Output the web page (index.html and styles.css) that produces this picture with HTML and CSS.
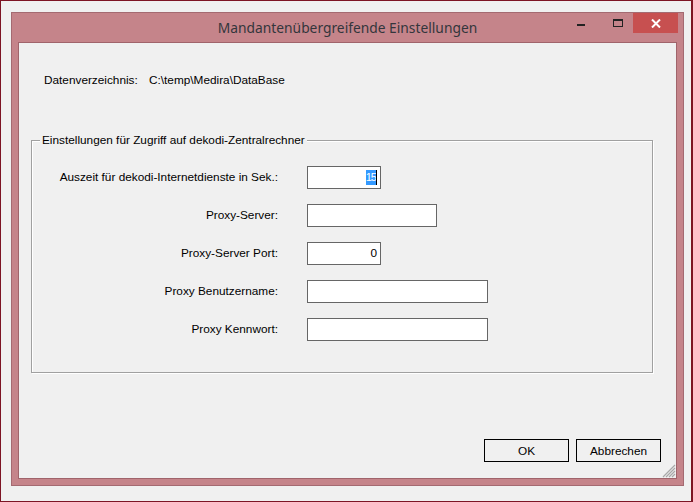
FILE: index.html
```html
<!DOCTYPE html>
<html lang="de">

<head>
  <meta charset="UTF-8">
  <title>Mandantenübergreifende Einstellungen</title>
  <link rel="stylesheet" href="styles.css">
</head>

<body>
  <div class="screen">
    <div class="window">
      <!-- Titelleiste -->
      <div class="titlebar">
        <span></span>
        <span class="title">Mandantenübergreifende Einstellungen</span>
        <div class="controls">
          <span class="btn-min"><i class="min"></i></span>
          <span class="btn-max"><i class="max"></i></span>
          <span class="btn-close">
            <svg width="10" height="9" viewBox="0 0 10 9">
              <path d="M1 0.5 L9 8.5 M9 0.5 L1 8.5" stroke="#fff" stroke-width="2" fill="none"/>
            </svg>
          </span>
        </div>
      </div>

      <!-- Inhalt -->
      <div class="client">
        <div class="datarow">
          <span class="datalabel">Datenverzeichnis:</span>
          <span>C:\temp\Medira\DataBase</span>
        </div>

        <div class="group">
          <span class="legend">Einstellungen für Zugriff auf dekodi-Zentralrechner</span>
          <div class="rows">
            <label>Auszeit für dekodi-Internetdienste in Sek.:</label>
            <div class="field short num"><span class="sel">15</span><span class="caret"></span></div>

            <label>Proxy-Server:</label>
            <div class="field mid"></div>

            <label>Proxy-Server Port:</label>
            <div class="field short num">0</div>

            <label>Proxy Benutzername:</label>
            <div class="field long"></div>

            <label>Proxy Kennwort:</label>
            <div class="field long"></div>
          </div>
        </div>

        <div class="buttons">
          <button>OK</button>
          <button>Abbrechen</button>
        </div>

        <svg class="grip" width="14" height="14" viewBox="0 0 14 14">
          <path d="M13 1 L1 13 M13 4 L4 13 M13 7 L7 13 M13 10 L10 13" stroke="#a8a8a8" stroke-width="1.2" fill="none"/>
        </svg>
      </div>
    </div>
  </div>
</body>

</html>
```

FILE: styles.css
```css
* {
  box-sizing: border-box;
  margin: 0;
  padding: 0;
}

body {
  width: 693px;
  height: 502px;
  overflow: hidden;
  font-family: "Liberation Sans", Arial, sans-serif;
  font-size: 11.8px;
  color: #000;
}

.screen {
  width: 693px;
  height: 502px;
  background-color: #f0f0f0;
  border: 1px solid #7d1424;
  border-right-width: 2px;
  padding: 11px 0 0 10px;
}

.window {
  width: 673px;
  height: 474px;
  background-color: #c5848a;
  border: 1px solid #a46a71;
  padding: 0 6px 6px 6px;
  display: flex;
  flex-direction: column;
}

.titlebar {
  height: 29px;
  display: grid;
  grid-template-columns: 1fr auto 1fr;
  align-items: start;
  margin: 0 -6px;
}

.title {
  font-family: "Noto Sans", sans-serif;
  font-size: 13.8px;
  line-height: 29px;
  color: #33363c;
}

.controls {
  justify-self: end;
  display: flex;
  align-items: flex-start;
  margin-right: 5px;
}

.btn-min, .btn-max {
  height: 20px;
}

.btn-min {
  width: 36px;
}

.btn-max {
  width: 34px;
}

.min {
  display: block;
  width: 8px;
  height: 2px;
  background-color: #222;
  margin: 11px 0 0 14px;
}

.max {
  display: block;
  width: 10px;
  height: 8px;
  border: 1px solid #222;
  border-top-width: 2px;
  margin: 6px 0 0 14px;
}

.btn-close {
  width: 45px;
  height: 20px;
  background-color: #c75050;
  display: flex;
  align-items: center;
  justify-content: center;
}

.client {
  flex: 1;
  background-color: #f0f0f0;
  border: 1px solid #a0646b;
  padding: 31px 15px 0 12px;
  position: relative;
  line-height: 13px;
}

.datarow {
  padding-left: 13px;
  display: flex;
}

.datalabel {
  width: 105px;
}

.group {
  margin-top: 53px;
  width: 622px;
  height: 233px;
  border: 1px solid #a0a0a0;
  box-shadow: 1px 1px 0 #fff, inset 1px 1px 0 #fff;
}

.legend {
  display: table;
  margin: -7px 0 0 8px;
  padding: 0 2px;
  background-color: #f0f0f0;
}

.rows {
  margin-top: 19px;
  display: grid;
  grid-template-columns: 246px 1fr;
  column-gap: 29px;
  row-gap: 15px;
  align-items: center;
}

.rows label {
  text-align: right;
}

.field {
  height: 23px;
  background-color: #fff;
  border: 1px solid #666;
  padding: 0 3px;
  line-height: 21px;
  display: flex;
  align-items: center;
}

.num {
  justify-content: flex-end;
}

.short {
  width: 74px;
}

.mid {
  width: 130px;
}

.long {
  width: 181px;
}

.sel {
  display: block;
  height: 15px;
  line-height: 15px;
  font-size: 11px;
  letter-spacing: -1px;
  white-space: nowrap;
  background-color: #3399ff;
  color: #fff;
}

.caret {
  display: block;
  width: 1px;
  height: 15px;
  background-color: #000;
}

.buttons {
  margin-top: 66px;
  display: flex;
  justify-content: flex-end;
  gap: 7px;
}

button {
  width: 85px;
  height: 23px;
  background-color: #f0f0f0;
  border: 1px solid #000;
  font-family: "Liberation Sans", Arial, sans-serif;
  font-size: 11.8px;
  color: #000;
}

.grip {
  position: absolute;
  right: 0;
  bottom: 0;
}
```
